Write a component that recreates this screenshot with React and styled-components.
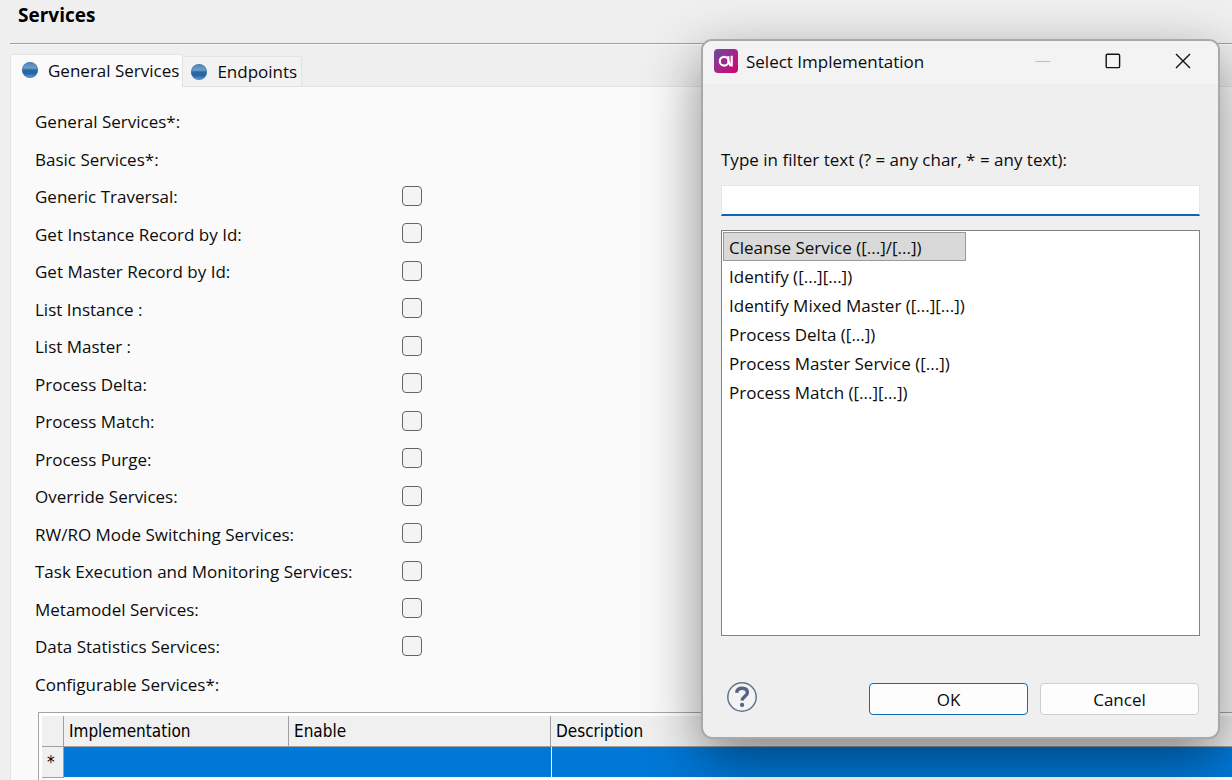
import { useState } from "react";
import styled, { createGlobalStyle, css } from "styled-components";

const GlobalStyle = createGlobalStyle`
  * {
    box-sizing: border-box;
  }
  body {
    margin: 0;
    overflow: hidden;
    background: #efefef;
    color: #0c0c0c;
    font-family: "Open Sans", "Noto Sans", sans-serif;
    font-size: 17px;
  }
  button, input {
    font: inherit;
    color: inherit;
  }
`;

const Page = styled.div`
  position: relative;
  display: flex;
  flex-direction: column;
  height: 100vh;
  overflow: hidden;
  padding-left: 10px;
`;
const Header = styled.header`
  height: 44px;
  flex-shrink: 0;
  padding: 2px 8px 0;
  border-bottom: 1px solid #a0a0a0;
  box-shadow: 0 1px 0 #fafafa;
`;
const Heading = styled.h1`
  margin: 0;
  font-size: 19px;
  line-height: 26px;
  color: #000;
`;
const Tabs = styled.div`
  display: flex;
  align-items: flex-end;
  flex-shrink: 0;
  height: 43px;
  box-shadow: inset 0 -1px 0 #e3e3e3;
`;
const Tab = styled.button`
  display: flex;
  align-items: center;
  gap: 10px;
  height: 31px;
  padding: 0 4px 0 8px;
  border: 1px solid #e3e3e3;
  border-left: 0;
  background: #f2f2f2;
  ${({ $active }) =>
    $active &&
    css`
      height: 33px;
      padding: 0 3px 2px 11px;
      border-left: 1px solid #e3e3e3;
      border-bottom: 0;
      background: #fafafa;
    `}
`;
const Panel = styled.main`
  flex: 1 0 auto;
  padding: 16px 0 0 24px;
  border-left: 1px solid #e3e3e3;
  background: #fafafa;
`;
const Form = styled.div`
  display: grid;
  grid-auto-rows: 1fr;
  height: 600px;
`;
const Row = styled.div`
  display: grid;
  grid-template-columns: 367px 20px;
  align-items: center;
`;
const Checkbox = styled.input`
  appearance: none;
  width: 20px;
  height: 20px;
  margin: 0 0 2px;
  border: 1px solid #666;
  border-radius: 4px;
  background: #f4f4f4;
  &:checked {
    background: #0067c0;
  }
`;
const TableFrame = styled.div`
  margin: 9px 0 0 3px;
  padding: 3px 0 3px 3px;
  border: 1px solid #a5a5a5;
  border-right: 0;
  background: #fff;
`;
const Table = styled.table`
  width: 100%;
  table-layout: fixed;
  border-collapse: separate;
  border-spacing: 0;
  color: #000;
  font-family: "DejaVu Sans Condensed", "DejaVu Sans", sans-serif;
  font-stretch: condensed;
`;
const Th = styled.th`
  width: ${({ $width }) => $width};
  height: 31px;
  padding: 0 5px;
  border-right: 1px solid #a0a0a0;
  border-bottom: 1px solid #a0a0a0;
  background: #f0f0f0;
  font-weight: 400;
  line-height: 22px;
  text-align: left;
  thead &:last-child {
    border-right: 0;
  }
`;
const Td = styled.td`
  height: 31px;
  padding: 0;
  border-bottom: 1px solid #fff;
  background: #0078d7;
  &:last-child {
    border-left: 1px solid #fff;
  }
`;
const RowHead = styled(Th)`
  line-height: 20px;
`;

const Dialog = styled.section`
  position: absolute;
  top: 39px;
  right: 12px;
  width: 519px;
  border: 2px solid #a9a9a9;
  border-radius: 11px;
  background: #efefef;
  box-shadow: 0 20px 56px rgba(0, 0, 0, 0.46);
  overflow: hidden;
`;
const TitleBar = styled.header`
  display: flex;
  align-items: center;
  height: 43px;
  padding: 0 0 3px 11px;
  background: #f3f3f3;
`;
const Title = styled.h2`
  flex: 1;
  margin: 0 0 0 8px;
  font-size: 17px;
  font-weight: 400;
`;
const WindowButton = styled.button`
  display: grid;
  place-items: center;
  width: 70px;
  height: 40px;
  padding: 0;
  border: 0;
  background: none;
`;
const Body = styled.div`
  padding: 64px 18px 22px;
`;
const FilterLabel = styled.label`
  display: block;
  line-height: 24px;
`;
const FilterInput = styled.input`
  display: block;
  width: 100%;
  height: 31px;
  margin: 13px 0 14px;
  padding: 0 8px;
  border: 1px solid #e6e6e6;
  border-bottom: 2px solid #0f66b4;
  background: #fff;
  outline: none;
`;
const ListBox = styled.div`
  height: 406px;
  padding: 1px;
  border: 1px solid #828282;
  background: #fff;
`;
const Options = styled.ul`
  width: max-content;
  margin: 0;
  padding: 0;
  list-style: none;
`;
const Option = styled.li`
  height: 29px;
  padding: 0 0 0 5px;
  border: 1px solid ${({ $selected }) => ($selected ? "#999" : "transparent")};
  background: ${({ $selected }) => ($selected ? "#d9d9d9" : "transparent")};
  line-height: 29px;
`;
const Footer = styled.footer`
  display: flex;
  align-items: center;
  gap: 12px;
  height: 32px;
  margin-top: 47px;
  padding-right: 1px;
`;
const HelpButton = styled.button`
  display: grid;
  margin: 0 auto 4px 5px;
  padding: 0;
  border: 0;
  background: none;
`;
const Button = styled.button`
  width: 159px;
  height: 32px;
  padding: 0;
  border: 1px solid ${({ $primary }) => ($primary ? "#0f6cb0" : "#cfcfcf")};
  border-radius: 4px;
  background: #fdfdfd;
`;

const services = [
  { label: "General Services*:" },
  { label: "Basic Services*:" },
  { label: "Generic Traversal:", check: true },
  { label: "Get Instance Record by Id:", check: true },
  { label: "Get Master Record by Id:", check: true },
  { label: "List Instance :", check: true },
  { label: "List Master :", check: true },
  { label: "Process Delta:", check: true },
  { label: "Process Match:", check: true },
  { label: "Process Purge:", check: true },
  { label: "Override Services:", check: true },
  { label: "RW/RO Mode Switching Services:", check: true },
  { label: "Task Execution and Monitoring Services:", check: true },
  { label: "Metamodel Services:", check: true },
  { label: "Data Statistics Services:", check: true },
  { label: "Configurable Services*:" },
];

const implementations = [
  "Cleanse Service ([...]/[...])",
  "Identify ([...][...])",
  "Identify Mixed Master ([...][...])",
  "Process Delta ([...])",
  "Process Master Service ([...])",
  "Process Match ([...][...])",
];

function Ball() {
  return (
    <svg width="16" height="16" viewBox="0 0 16 16" aria-hidden="true">
      <defs>
        <linearGradient id="ball" x1="0" y1="0" x2="0" y2="1">
          <stop offset="0" stopColor="#4f86ba" />
          <stop offset="0.38" stopColor="#6f9dc8" />
          <stop offset="0.5" stopColor="#2a68a4" />
          <stop offset="0.72" stopColor="#2466a5" />
          <stop offset="1" stopColor="#6aa6d8" />
        </linearGradient>
      </defs>
      <circle cx="8" cy="8" r="8" fill="url(#ball)" />
      <circle cx="8" cy="8" r="7.4" fill="none" stroke="#3e78ae" strokeOpacity="0.5" />
    </svg>
  );
}

function Logo() {
  return (
    <svg width="24" height="24" viewBox="0 0 24 24" aria-hidden="true">
      <defs>
        <linearGradient id="logo" x1="0" y1="0" x2="1" y2="1">
          <stop offset="0" stopColor="#6a4a9c" />
          <stop offset="0.5" stopColor="#a3268a" />
          <stop offset="1" stopColor="#d6006e" />
        </linearGradient>
      </defs>
      <rect width="24" height="24" rx="4" fill="url(#logo)" />
      <g fill="none" stroke="#fff" strokeWidth="2.2">
        <circle cx="10.2" cy="12.2" r="4.4" />
        <path d="M14.4 7.2c-.4 4 .3 7.300 2.200 9.600M17.700 6.800v10.600" />
      </g>
    </svg>
  );
}

function App() {
  const [selected, setSelected] = useState(implementations[0]);

  return (
    <>
      <GlobalStyle />
      <Page>
        <Header>
          <Heading>Services</Heading>
        </Header>
        <Tabs role="tablist">
          <Tab role="tab" aria-selected="true" $active>
            <Ball />
            General Services
          </Tab>
          <Tab role="tab" aria-selected="false">
            <Ball />
            Endpoints
          </Tab>
        </Tabs>
        <Panel>
          <Form>
            {services.map(({ label, check }, i) => (
              <Row key={label}>
                {check ? <label htmlFor={`service-${i}`}>{label}</label> : <span>{label}</span>}
                {check && <Checkbox type="checkbox" id={`service-${i}`} />}
              </Row>
            ))}
          </Form>
          <TableFrame>
            <Table>
              <thead>
                <tr>
                  <Th $width="22px" />
                  <Th $width="225px">Implementation</Th>
                  <Th $width="262px">Enable</Th>
                  <Th>Description</Th>
                </tr>
              </thead>
              <tbody>
                <tr>
                  <RowHead scope="row">*</RowHead>
                  <Td />
                  <Td />
                  <Td />
                </tr>
              </tbody>
            </Table>
          </TableFrame>
        </Panel>

        <Dialog role="dialog" aria-labelledby="dialog-title">
          <TitleBar>
            <Logo />
            <Title id="dialog-title">Select Implementation</Title>
            <WindowButton aria-label="Minimize" disabled>
              <svg width="16" height="16" viewBox="0 0 16 16">
                <path d="M0.5 8.5h15" stroke="#bdbdbd" />
              </svg>
            </WindowButton>
            <WindowButton aria-label="Maximize">
              <svg width="16" height="16" viewBox="0 0 16 16">
                <rect x="1.2" y="1.2" width="13.4" height="13.4" rx="1.2" fill="none" stroke="#111" strokeWidth="1.4" />
              </svg>
            </WindowButton>
            <WindowButton aria-label="Close">
              <svg width="16" height="16" viewBox="0 0 16 16">
                <path d="M1 1l14 14M15 1L1 15" stroke="#111" strokeWidth="1.4" />
              </svg>
            </WindowButton>
          </TitleBar>
          <Body>
            <FilterLabel htmlFor="filter">Type in filter text (? = any char, * = any text):</FilterLabel>
            <FilterInput id="filter" type="text" />
            <ListBox>
              <Options role="listbox" aria-label="Implementations">
                {implementations.map((name) => (
                  <Option
                    key={name}
                    role="option"
                    aria-selected={name === selected}
                    $selected={name === selected}
                    onClick={() => setSelected(name)}
                  >
                    {name}
                  </Option>
                ))}
              </Options>
            </ListBox>
            <Footer>
              <HelpButton aria-label="Help">
                <svg width="32" height="32" viewBox="0 0 32 32" fill="none" stroke="#536583">
                  <circle cx="16" cy="16" r="14.2" fill="#f3f3f3" stroke="#64748f" strokeWidth="1.5" />
                  <path d="M10.6 11.8c.4-3 2.4-4.5 5.5-4.5 3.3 0 5.3 1.7 5.3 4.3 0 3.9-5.2 3.7-5.2 8" strokeWidth="3.4" />
                  <circle cx="16.1" cy="23.9" r="2.1" fill="#536583" stroke="none" />
                </svg>
              </HelpButton>
              <Button $primary>OK</Button>
              <Button>Cancel</Button>
            </Footer>
          </Body>
        </Dialog>
      </Page>
    </>
  );
}
export default App;
